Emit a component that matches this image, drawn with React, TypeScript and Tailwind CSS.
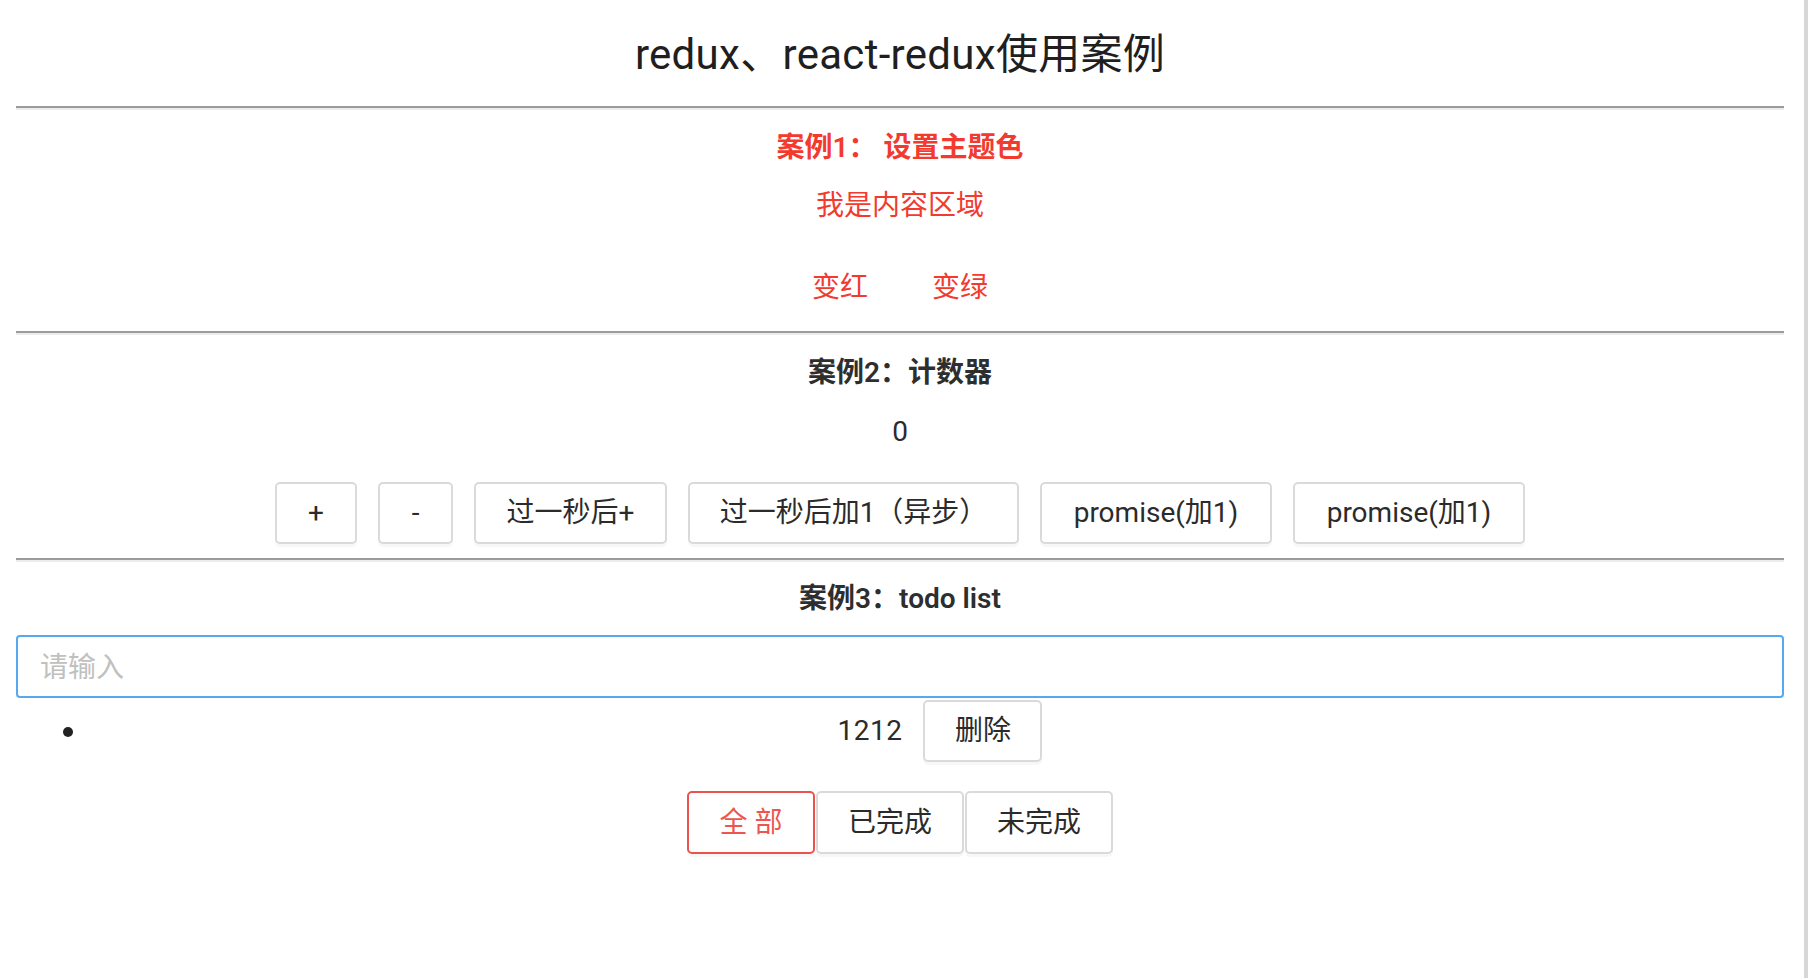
import { useState } from 'react';

const font = "font-['Roboto','Noto_Sans_CJK_SC',sans-serif]";

function Divider() {
  return <div className="h-0 border-t-2 border-b-2 border-t-[#9b9b9b] border-b-[#ececec]" />;
}

function Btn({
  children,
  className = '',
  onClick,
}: {
  children: React.ReactNode;
  className?: string;
  onClick?: () => void;
}) {
  return (
    <button
      type="button"
      onClick={onClick}
      className={`flex h-[62px] items-center justify-center rounded-[5px] border-2 border-[#dadada] bg-white text-[28px] leading-none text-[#2b2b2b] shadow-[0_3px_0_rgba(0,0,0,0.03)] ${className}`}
    >
      {children}
    </button>
  );
}

export default function App() {
  const [color, setColor] = useState('#f23a2f');
  const [count, setCount] = useState(0);
  const [filter, setFilter] = useState('all');
  const [todos, setTodos] = useState(['1212']);
  const [text, setText] = useState('');

  const filters = [
    { key: 'all', label: '全 部', w: 'w-[128px]' },
    { key: 'done', label: '已完成', w: 'w-[148px]' },
    { key: 'todo', label: '未完成', w: 'w-[148px]' },
  ];

  return (
    <div className={`flex h-[978px] w-full bg-white ${font}`}>
      <main className="flex-1 pl-[16px] pr-[20px]">
        <h1 className="flex h-[106px] items-center justify-center pt-[2px] text-[42px] font-normal tracking-[0.3px] text-[#1f1f1f]">
          redux、react-redux使用案例
        </h1>
        <Divider />

        {/* 案例1 */}
        <section className="flex flex-col items-center">
          <h3 className="mt-[20px] h-[36px] text-[28px] font-semibold leading-[36px]" style={{ color }}>
            案例1： 设置主题色
          </h3>
          <p className="mt-[22px] h-[36px] text-[28px] leading-[36px]" style={{ color }}>
            我是内容区域
          </p>
          <div className="mt-[46px] flex h-[36px] gap-[64px]">
            <button
              type="button"
              onClick={() => setColor('#f23a2f')}
              className="w-[56px] text-[28px] leading-[36px]"
              style={{ color }}
            >
              变红
            </button>
            <button
              type="button"
              onClick={() => setColor('#2fa84f')}
              className="w-[56px] text-[28px] leading-[36px]"
              style={{ color }}
            >
              变绿
            </button>
          </div>
        </section>
        <div className="mt-[25px]">
          <Divider />
        </div>

        {/* 案例2 */}
        <section className="flex flex-col items-center">
          <h3 className="mt-[20px] h-[36px] text-[28px] font-semibold leading-[36px] text-[#2e2e2e]">
            案例2：计数器
          </h3>
          <p className="mt-[23px] h-[36px] text-[28px] leading-[36px] text-[#2b2b2b]">{count}</p>
          <div className="mt-[32px] flex gap-[21px]">
            <Btn className="w-[82px]" onClick={() => setCount(count + 1)}>
              +
            </Btn>
            <Btn className="w-[75px]" onClick={() => setCount(count - 1)}>
              -
            </Btn>
            <Btn className="w-[193px]" onClick={() => setTimeout(() => setCount((c) => c + 1), 1000)}>
              过一秒后+
            </Btn>
            <Btn className="w-[331px]" onClick={() => setTimeout(() => setCount((c) => c + 1), 1000)}>
              过一秒后加1（异步）
            </Btn>
            <Btn className="w-[232px]" onClick={() => Promise.resolve().then(() => setCount((c) => c + 1))}>
              promise(加1)
            </Btn>
            <Btn className="w-[232px]" onClick={() => Promise.resolve().then(() => setCount((c) => c + 1))}>
              promise(加1)
            </Btn>
          </div>
        </section>
        <div className="mt-[14px]">
          <Divider />
        </div>

        {/* 案例3 */}
        <section className="flex flex-col">
          <h3 className="mt-[19px] h-[36px] text-center text-[28px] font-semibold leading-[36px] text-[#2e2e2e]">
            案例3：todo list
          </h3>
          <input
            value={text}
            onChange={(e) => setText(e.target.value)}
            onKeyDown={(e) => {
              if (e.key === 'Enter' && text.trim()) {
                setTodos([...todos, text.trim()]);
                setText('');
              }
            }}
            placeholder="请输入"
            className="mt-[18px] h-[63px] w-full rounded-[4px] border-2 border-[#58a7f1] px-[22px] pt-[2px] text-[28px] text-[#2b2b2b] outline-none placeholder:text-[#c0c0c0]"
          />
          <ul className="mt-[2px]">
            {todos.map((t, i) => (
              <li key={i} className="flex h-[62px] items-center">
                <span className="ml-[47px] mt-[2px] h-[10px] w-[10px] rounded-full bg-[#222]" />
                <div className="flex flex-1 items-center justify-center gap-[21px] pl-[23px]">
                  <span className="text-[28px] tracking-[0.5px] text-[#2b2b2b]">{t}</span>
                  <Btn className="w-[119px]" onClick={() => setTodos(todos.filter((_, j) => j !== i))}>
                    删除
                  </Btn>
                </div>
              </li>
            ))}
          </ul>
          <div className="mt-[29px] flex justify-center gap-[1px]">
            {filters.map((f) => (
              <button
                key={f.key}
                type="button"
                onClick={() => setFilter(f.key)}
                className={`flex h-[63px] items-center justify-center rounded-[5px] border-2 bg-white text-[28px] leading-none shadow-[0_3px_0_rgba(0,0,0,0.03)] ${f.w} ${
                  filter === f.key ? 'border-[#ea534d] text-[#ec5550]' : 'border-[#dadada] text-[#2b2b2b]'
                }`}
              >
                {f.label}
              </button>
            ))}
          </div>
        </section>
      </main>
      <div className="w-[4px] bg-[#d7d7d7]" />
    </div>
  );
}
